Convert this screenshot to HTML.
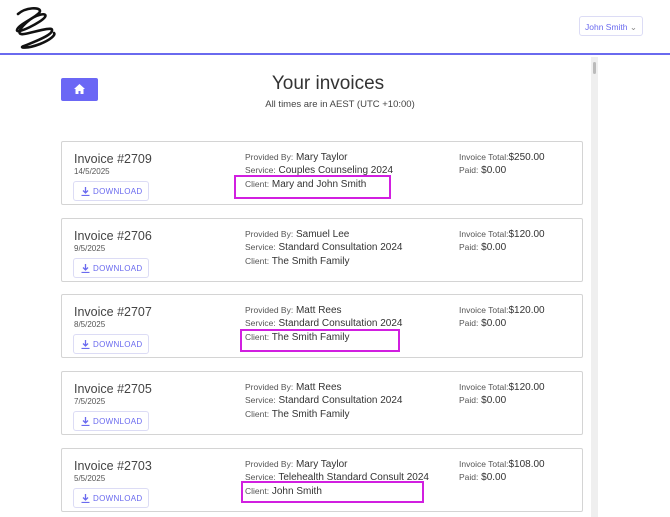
<!DOCTYPE html>
<html><head><style>
*{margin:0;padding:0;box-sizing:border-box}
body{width:670px;height:517px;overflow:hidden;background:#fff;font-family:"Liberation Sans",sans-serif;color:#444;position:relative}
.hdr{position:absolute;left:0;top:0;width:670px;height:55px;border-bottom:2px solid #6a6aef}
.user{position:absolute;left:579px;top:16px;width:64px;height:20px;border:1px solid #dcdcf5;border-radius:3px;font-size:8.5px;color:#6a6aef;padding:5px 0 0 5px}
.sb{position:absolute;left:591px;top:57px;width:7px;height:460px;background:#efefef}
.sb i{position:absolute;left:2px;top:5px;width:3px;height:12px;background:#bbb;border-radius:2px}
.home{position:absolute;left:61px;top:78px;width:37px;height:23px;background:#6b67f5;border-radius:2px}
h1{position:absolute;left:188px;width:280px;text-align:center;top:73px;font-weight:normal;font-size:19px;color:#333}
.sub{position:absolute;left:200px;width:280px;text-align:center;top:99px;font-size:9.5px;color:#444}
.card{position:absolute;left:61px;width:522px;height:64px;border:1px solid #d4d4d4;border-radius:2px;background:#fff}
.t{position:absolute;left:12px;top:10px;font-size:12.5px;color:#444}
.d{position:absolute;left:12px;top:25px;font-size:8px;color:#555}
.dl{position:absolute;left:11px;top:39px;width:76px;height:20px;border:1px solid #dcdcf5;border-radius:3px;font-size:8px;color:#6a6aef;padding:5px 0 0 19px;letter-spacing:.3px}
.dl svg{position:absolute;left:7px;top:5px}
.m{position:absolute;left:183px;font-size:10px;color:#333}
.m b,.r b{font-weight:normal;font-size:8.5px;color:#555}
.r{position:absolute;left:397px;font-size:10px;color:#333}
.hl{position:absolute;border:2px solid #d11fe0}
</style></head><body>
<div class="hdr">
<svg style="position:absolute;left:12px;top:4px" width="48" height="46" viewBox="0 0 48 46"><path d="M6 10 C14 3 28 3 28 7 C28 12 6 20 5 26 C4 31 30 18 33 13 C36 8 24 10 15 18 C5 27 6 31 12 30 C20 29 40 22 40 26 C41 31 22 38 12 42 C6 44 15 45 28 40 C38 36 44 31 42 29" fill="none" stroke="#111" stroke-width="2.6" stroke-linecap="round"/></svg>
<div class="user">John Smith <span style="color:#888">⌄</span></div>
</div>
<div class="sb"><i></i></div>
<div class="home"><svg style="position:absolute;left:13px;top:6px" width="11" height="10" viewBox="0 0 11 10"><path d="M5.5 0L0 5h1.5v5h3V7h2v3h3V5H11z" fill="#fff"/></svg></div>
<h1>Your invoices</h1>
<div class="sub">All times are in AEST (UTC +10:00)</div>

<div class="card" style="top:141px"><div class="t">Invoice #2709</div><div class="d">14/5/2025</div><div class="dl"><svg width="9" height="9" viewBox="0 0 9 9"><path d="M4.5 0v6M2 3.5l2.5 2.5 2.5-2.5M0.5 8.5h8" stroke="#6a6aef" stroke-width="1.3" fill="none"/></svg>DOWNLOAD</div>
<div class="m" style="top:10px"><b>Provided By:</b> Mary Taylor</div><div class="m" style="top:23px"><b>Service:</b> Couples Counseling 2024</div><div class="m" style="top:37px"><b>Client:</b> Mary and John Smith</div>
<div class="r" style="top:10px"><b>Invoice Total:</b>$250.00</div><div class="r" style="top:23px"><b>Paid:</b> $0.00</div></div>

<div class="card" style="top:218px"><div class="t">Invoice #2706</div><div class="d">9/5/2025</div><div class="dl"><svg width="9" height="9" viewBox="0 0 9 9"><path d="M4.5 0v6M2 3.5l2.5 2.5 2.5-2.5M0.5 8.5h8" stroke="#6a6aef" stroke-width="1.3" fill="none"/></svg>DOWNLOAD</div>
<div class="m" style="top:10px"><b>Provided By:</b> Samuel Lee</div><div class="m" style="top:23px"><b>Service:</b> Standard Consultation 2024</div><div class="m" style="top:37px"><b>Client:</b> The Smith Family</div>
<div class="r" style="top:10px"><b>Invoice Total:</b>$120.00</div><div class="r" style="top:23px"><b>Paid:</b> $0.00</div></div>

<div class="card" style="top:294px"><div class="t">Invoice #2707</div><div class="d">8/5/2025</div><div class="dl"><svg width="9" height="9" viewBox="0 0 9 9"><path d="M4.5 0v6M2 3.5l2.5 2.5 2.5-2.5M0.5 8.5h8" stroke="#6a6aef" stroke-width="1.3" fill="none"/></svg>DOWNLOAD</div>
<div class="m" style="top:10px"><b>Provided By:</b> Matt Rees</div><div class="m" style="top:23px"><b>Service:</b> Standard Consultation 2024</div><div class="m" style="top:37px"><b>Client:</b> The Smith Family</div>
<div class="r" style="top:10px"><b>Invoice Total:</b>$120.00</div><div class="r" style="top:23px"><b>Paid:</b> $0.00</div></div>

<div class="card" style="top:371px"><div class="t">Invoice #2705</div><div class="d">7/5/2025</div><div class="dl"><svg width="9" height="9" viewBox="0 0 9 9"><path d="M4.5 0v6M2 3.5l2.5 2.5 2.5-2.5M0.5 8.5h8" stroke="#6a6aef" stroke-width="1.3" fill="none"/></svg>DOWNLOAD</div>
<div class="m" style="top:10px"><b>Provided By:</b> Matt Rees</div><div class="m" style="top:23px"><b>Service:</b> Standard Consultation 2024</div><div class="m" style="top:37px"><b>Client:</b> The Smith Family</div>
<div class="r" style="top:10px"><b>Invoice Total:</b>$120.00</div><div class="r" style="top:23px"><b>Paid:</b> $0.00</div></div>

<div class="card" style="top:448px"><div class="t">Invoice #2703</div><div class="d">5/5/2025</div><div class="dl"><svg width="9" height="9" viewBox="0 0 9 9"><path d="M4.5 0v6M2 3.5l2.5 2.5 2.5-2.5M0.5 8.5h8" stroke="#6a6aef" stroke-width="1.3" fill="none"/></svg>DOWNLOAD</div>
<div class="m" style="top:10px"><b>Provided By:</b> Mary Taylor</div><div class="m" style="top:23px"><b>Service:</b> Telehealth Standard Consult 2024</div><div class="m" style="top:37px"><b>Client:</b> John Smith</div>
<div class="r" style="top:10px"><b>Invoice Total:</b>$108.00</div><div class="r" style="top:23px"><b>Paid:</b> $0.00</div></div>

<div class="hl" style="left:234px;top:175px;width:157px;height:24px"></div>
<div class="hl" style="left:240px;top:329px;width:160px;height:23px"></div>
<div class="hl" style="left:241px;top:481px;width:183px;height:22px"></div>
</body></html>
